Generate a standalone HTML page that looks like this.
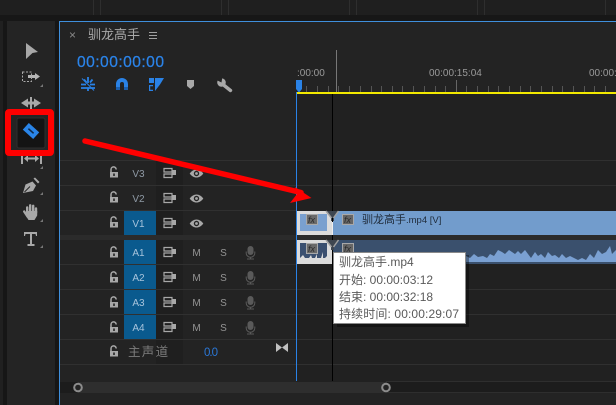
<!DOCTYPE html>
<html><head><meta charset="utf-8"><style>
html,body{margin:0;padding:0;background:#1c1c1c;width:616px;height:405px;overflow:hidden}
svg{display:block}
text{font-family:"Liberation Sans","Noto Sans CJK SC",sans-serif}
</style></head><body>
<svg width="616" height="405" viewBox="0 0 616 405" xmlns="http://www.w3.org/2000/svg">
<rect width="616" height="405" fill="#1c1c1c"/>
<rect width="616" height="15" fill="#1f1f1f"/>
<rect y="15" width="616" height="6" fill="#171717"/>
<path d="M93.5 0V15M100.5 0V15M221.5 0V15M228.5 0V15M349.5 0V15M356.5 0V15M477.5 0V15M484.5 0V15M605.5 0V15" stroke="#2e2e2e"/>
<rect x="0" y="21" width="3" height="384" fill="#202020"/>
<rect x="3" y="21" width="4" height="384" fill="#161616"/>
<rect x="7" y="21" width="48" height="384" fill="#242424"/>
<rect x="55" y="21" width="4" height="384" fill="#161616"/>
<!-- panel -->
<rect x="59" y="21" width="557" height="384" fill="#232323"/>
<rect x="59" y="21" width="557" height="1" fill="#3f8fdc"/>
<rect x="59" y="21" width="1" height="384" fill="#3f8fdc"/>
<rect x="297" y="94" width="319" height="288" fill="#212121"/>
<!-- tab -->
<text x="69" y="39" font-size="12" fill="#8a8a8a">×</text>
<text x="88" y="39" font-size="13" fill="#a8a8a8">驯龙高手</text>
<path d="M149 32.5h8M149 35.5h8M149 38.5h8" stroke="#a0a0a0"/>
<text x="77" y="67" font-size="15.6" fill="#2b84ea" textLength="87" stroke="#2b84ea" stroke-width=".25">00:00:00:00</text>
<!-- toolbar icons -->
<g fill="none" stroke="#2a82e6" stroke-width="1.800">
<path d="M88 77V83M81 84.500H86M90 84.500H95M81 88H95M88 88V91M84 79.500L86.500 82.500M92.500 79.500L90 82.500"/>
<path d="M82 78.500L94 90.500" stroke-width="1"/>
</g>
<path d="M116 90v-6a6 6 0 0 1 12 0v6h-4v-6a2 2 0 0 0-4 0v6z" fill="#2a82e6"/>
<rect x="116" y="87" width="4" height="3" fill="#1b5fae"/><rect x="124" y="87" width="4" height="3" fill="#1b5fae"/>
<path d="M149 78h5v5h-5zM155 78H164L160 84.500L155 91zM149 85h4v1.200h-2.800v3.600H153V91h-4z" fill="#2a82e6"/>
<path d="M187 80h7v6l-3.500 3-3.500-3z" fill="#a8a8a8"/>
<path d="M223 84.500L230.500 90.500" stroke="#a8a8a8" stroke-width="3.400" stroke-linecap="round"/>
<circle cx="221.500" cy="82.500" r="4.300" fill="#a8a8a8"/>
<path d="M216.500 80L221.500 82.500L222.500 76z" fill="#232323"/>
<!-- ruler -->
<text x="297" y="76" font-size="10" fill="#9a9a9a">:00:00</text>
<text x="429" y="76" font-size="10" fill="#9a9a9a">00:00:15:04</text>
<text x="589" y="76" font-size="10" fill="#9a9a9a">00:00:</text>
<path d="M306.500 86v6M317.500 86v6M328.500 86v6M338.500 86v6M349.500 86v6M360.500 86v6M371.500 86v6M381.500 86v6M392.500 86v6M402.500 86v6M413.500 86v6M424.500 86v6M435.500 86v6M445.500 86v6M466.500 86v6M477.500 86v6M488.500 86v6M498.500 86v6M509.500 86v6M520.500 86v6M530.500 86v6M541.500 86v6M552.500 86v6M562.500 86v6M573.500 86v6M584.500 86v6M594.500 86v6M605.500 86v6" stroke="#555"/>
<rect x="456" y="80" width="1" height="12" fill="#666"/>
<rect x="336" y="50" width="1" height="42" fill="#777"/>
<rect x="297" y="92" width="319" height="2" fill="#f2e800"/>
<!-- track head bg -->
<rect x="156" y="161" width="27" height="204" fill="#1f1f1f"/>
<rect x="60" y="235" width="556" height="5" fill="#2b2b2b"/>
<!-- separators -->
<path d="M60 160.500H616M60 185.500H616M60 210.500H296M60 264.500H296M60 289.500H616M60 314.500H616M60 339.500H616M60 364.500H616" stroke="#303030"/>
<!-- name boxes -->
<rect x="124" y="211" width="32" height="24" fill="#0a5a8e"/>
<rect x="124" y="240" width="32" height="24" fill="#0a5a8e"/>
<rect x="124" y="265" width="32" height="24" fill="#0a5a8e"/>
<rect x="124" y="290" width="32" height="24" fill="#0a5a8e"/>
<rect x="124" y="315" width="32" height="24" fill="#0a5a8e"/>
<g font-size="10" fill="#8f9aa5" text-anchor="middle">
<text x="138.500" y="177">V3</text><text x="138.500" y="202">V2</text>
<g fill="#a8c4dc"><text x="138.500" y="227">V1</text><text x="138.500" y="256">A1</text><text x="138.500" y="281">A2</text><text x="138.500" y="306">A3</text><text x="138.500" y="331">A4</text></g>
</g>
<defs>
<g id="lock"><path d="M-3 0v-2.500a2.600 2.600 0 0 1 5.200 0" fill="none" stroke="#a8a8a8" stroke-width="1.500"/><path d="M-4 0h8v5.500h-8z" fill="#a8a8a8"/><rect x="-.8" y="1.500" width="1.600" height="2.500" fill="#232323"/></g>
<g id="sync"><path d="M-5.500 -4.500h8v3.500h-8zM-5.500 1h8v3.500h-8z" fill="none" stroke="#a8a8a8" stroke-width="1.200"/><rect x="2" y="-3" width="4.500" height="5" fill="#a8a8a8"/></g>
<g id="eye"><path d="M-6.800 0C-3 -5.400 3 -5.400 6.800 0C3 5.400 -3 5.400 -6.800 0z" fill="#a8a8a8"/><circle r="2.700" fill="#232323"/><circle r="1.400" fill="#a8a8a8"/></g>
<g id="mic"><rect x="-3" y="-6" width="6" height="9" rx="3" fill="#5a5a5a"/><path d="M-4.300 -.5v1.500a4.300 4.300 0 0 0 8.600 0v-1.500M0 5.500v1.500M-3.500 7h7" fill="none" stroke="#5a5a5a" stroke-width="1"/></g>
</defs>
<use href="#lock" x="114" y="172"/><use href="#lock" x="114" y="197"/><use href="#lock" x="114" y="222"/><use href="#lock" x="114" y="252"/><use href="#lock" x="114" y="277"/><use href="#lock" x="114" y="302"/><use href="#lock" x="114" y="327"/><use href="#lock" x="114" y="351"/>
<use href="#sync" x="169.500" y="173"/><use href="#sync" x="169.500" y="198"/><use href="#sync" x="169.500" y="223"/><use href="#sync" x="169.500" y="252"/><use href="#sync" x="169.500" y="277"/><use href="#sync" x="169.500" y="302"/><use href="#sync" x="169.500" y="327"/>
<use href="#eye" x="196.500" y="173.500"/><use href="#eye" x="196.500" y="198.500"/><use href="#eye" x="196.500" y="223.500"/>
<g font-size="10" fill="#949494" text-anchor="middle">
<text x="196.500" y="256">M</text><text x="196.500" y="281">M</text><text x="196.500" y="306">M</text><text x="196.500" y="331">M</text>
<text x="223.500" y="256">S</text><text x="223.500" y="281">S</text><text x="223.500" y="306">S</text><text x="223.500" y="331">S</text>
</g>
<use href="#mic" x="250.500" y="252"/><use href="#mic" x="250.500" y="277"/><use href="#mic" x="250.500" y="302"/><use href="#mic" x="250.500" y="327"/>
<text x="128" y="356" font-size="12.500" fill="#7c7c7c" letter-spacing="1.300">主声道</text>
<text x="204" y="356" font-size="11.500" fill="#2b78d8" textLength="14">0.0</text>
<path d="M276 343L282 347.500L276 352zM288 343L282 347.500L288 352z" fill="#c0c0c0"/>
<!-- clips V1 -->
<rect x="297" y="211" width="35" height="24" fill="#dcdcdc"/>
<rect x="300" y="214" width="27" height="17" fill="#7aa0cf"/>
<rect x="333" y="211" width="283" height="24" fill="#729ccc"/>
<rect x="306.500" y="214.500" width="11" height="10" fill="#6a6a6a" stroke="#a8a8a8"/>
<rect x="342.500" y="214.500" width="11" height="10" fill="#666" stroke="#a8a8a8"/>
<text x="308" y="223" font-size="9" font-style="italic" fill="#2a2a2a">fx</text>
<text x="344" y="223" font-size="9" font-style="italic" fill="#2a2a2a">fx</text>
<text x="362" y="223" font-size="11" fill="#1f2b3a">驯龙高手<tspan font-size="9.500">.mp4 [V]</tspan></text>
<!-- clips A1 -->
<rect x="297" y="240" width="35" height="24" fill="#dcdcdc"/>
<path d="M300 243h27v13l-2 2h-2v-6l-2 6h-4v-4l-2 4h-3l-1-3-2 3h-4l-2-3-3 3z" fill="#3b5070"/>
<rect x="333" y="240" width="283" height="24" fill="#3a506d"/>
<rect x="306.500" y="243.500" width="11" height="10" fill="#6a6a6a" stroke="#a8a8a8"/>
<rect x="342.500" y="243.500" width="11" height="10" fill="#666" stroke="#a8a8a8"/>
<text x="308" y="252" font-size="9" font-style="italic" fill="#2a2a2a">fx</text>
<text x="344" y="252" font-size="9" font-style="italic" fill="#2a2a2a">fx</text>
<path d="M466 262V256L470 258L474 254L478 257L483 256L487 258L490 254L494 256L498 250L502 252L505 254L509 250L512 252L515 254L518 251L521 254L525 250L528 254L531 258L535 252L538 256L541 254L545 258L548 252L552 256L555 255L559 258L562 254L566 258L570 256L574 258L578 260L582 258L586 260L590 254L594 258L598 250L602 254L606 252L610 246L612 254L616 250V262z" fill="#7aa0d2"/>
<!-- playheads -->
<rect x="296" y="94" width="1" height="287" fill="#2a82e6"/>
<rect x="332" y="94" width="1" height="287" fill="#000"/>
<rect x="332" y="222" width="1" height="13" fill="#eee"/>
<!-- transition Y -->
<path d="M326.500 211L331 217V221H334V217L338.500 211z" fill="#3e4650"/>
<path d="M326 211L331.500 218M338.500 211L333.500 218" stroke="#a0a0a0" stroke-width="1.500" fill="none"/>
<path d="M326.500 240L331 246V250H334V246L338.500 240z" fill="#3e4650"/>
<path d="M326 240L331.500 247M338.500 240L333.500 247" stroke="#a0a0a0" stroke-width="1.500" fill="none"/>
<rect x="332" y="218" width="1" height="4" fill="#000"/>
<path d="M296 80h6v9l-2.500 3h-1L296 89z" fill="#2a82e6"/>
<rect x="296" y="92" width="1" height="2" fill="#2a82e6"/>
<!-- tooltip -->
<rect x="337" y="255" width="132" height="72" fill="#000" opacity=".35"/>
<rect x="333.500" y="252.500" width="132" height="71" fill="#fff" stroke="#8a8a8a"/>
<g font-size="12" fill="#5a5a5a">
<text x="339" y="266">驯龙高手.mp4</text>
<text x="339" y="284">开始: 00:00:03:12</text>
<text x="339" y="301">结束: 00:00:32:18</text>
<text x="339" y="318" textLength="120">持续时间: 00:00:29:07</text>
</g>
<!-- scrollbar -->
<rect x="60" y="382" width="556" height="11" fill="#1c1c1c"/>
<path d="M386 381.500H616M386 392.500H616" stroke="#2e2e2e"/>
<rect x="78" y="382" width="309" height="11" fill="#2e2e2e"/>
<circle cx="78" cy="387.500" r="3.800" fill="#232323" stroke="#8c8c8c" stroke-width="2"/>
<circle cx="386" cy="387.500" r="3.800" fill="#232323" stroke="#8c8c8c" stroke-width="2"/>
<!-- tools -->
<g fill="#a8a8a8">
<path d="M26 43L38 52L32.500 53L26 59z"/>
<path d="M28 75h7v-2l5 3.500-5 3.500v-2h-7z" fill="#b5b5b5"/>
<rect x="22.500" y="72" width="9" height="9.500" fill="none" stroke="#a8a8a8" stroke-dasharray="2 1.500"/>
<path d="M21 103l7-4.500v3h2v3h-2v3zM41 103l-7-4.500v3h-2v3h2v3z"/>
<rect x="30" y="97" width="2" height="13"/>
<path d="M21 150h2v14h-2zM40 150h2v14h-2zM24 158.500l4-3.500v2.500h7V155l4 3.500-4 3.500v-2.500h-7v2.500z"/>
<!-- pen -->
<path d="M23 193L25.500 184.500L32.500 181.500L36 185.500L33 191z"/>
<path d="M33.500 178.500L35 177.500L39.500 182L38 183.500z"/>
<!-- hand -->
<g fill="none" stroke="#a8a8a8" stroke-width="2.400" stroke-linecap="round">
<path d="M27.200 212V207.500M30.200 212V205.300M33.200 212V205.800M36 213V208.500M24.200 211.500L27.500 216.500"/>
</g>
<path d="M26 211H37.200V215.500L34.500 220H28.500L26 216z"/>
<!-- T -->
<path d="M24 232H37V236H36L35.500 234H32V244H34.500V246H27.500V244H30V234H25.500L25 236H24z"/>
</g>
<g fill="#777"><path d="M43 84v3h-3zM43 166v3h-3zM43 192v3h-3zM43 219v3h-3zM43 245v3h-3z"/></g>
<path d="M24.500 192L30 186.500" stroke="#242424" stroke-width="1"/>
<!-- red rect + razor -->
<rect x="17" y="118" width="28" height="30" rx="2" fill="#141414" stroke="#2e2e2e"/>
<rect x="8" y="112" width="43" height="41" fill="none" stroke="#fe0000" stroke-width="6" rx="1"/>
<g transform="rotate(42 31 131)">
<rect x="24" y="126.500" width="14" height="9" fill="#2a85e8"/>
<path d="M27.500 131H34.500" stroke="#0e2a4a" stroke-width="1.600"/>
</g>
<!-- red arrow -->
<path d="M85 141L301 192.500" stroke="#fe0000" stroke-width="5.500" stroke-linecap="round"/>
<path d="M295 187L311.500 198L290 203L297 194z" fill="#fe0000"/>
</svg>
</body></html>
